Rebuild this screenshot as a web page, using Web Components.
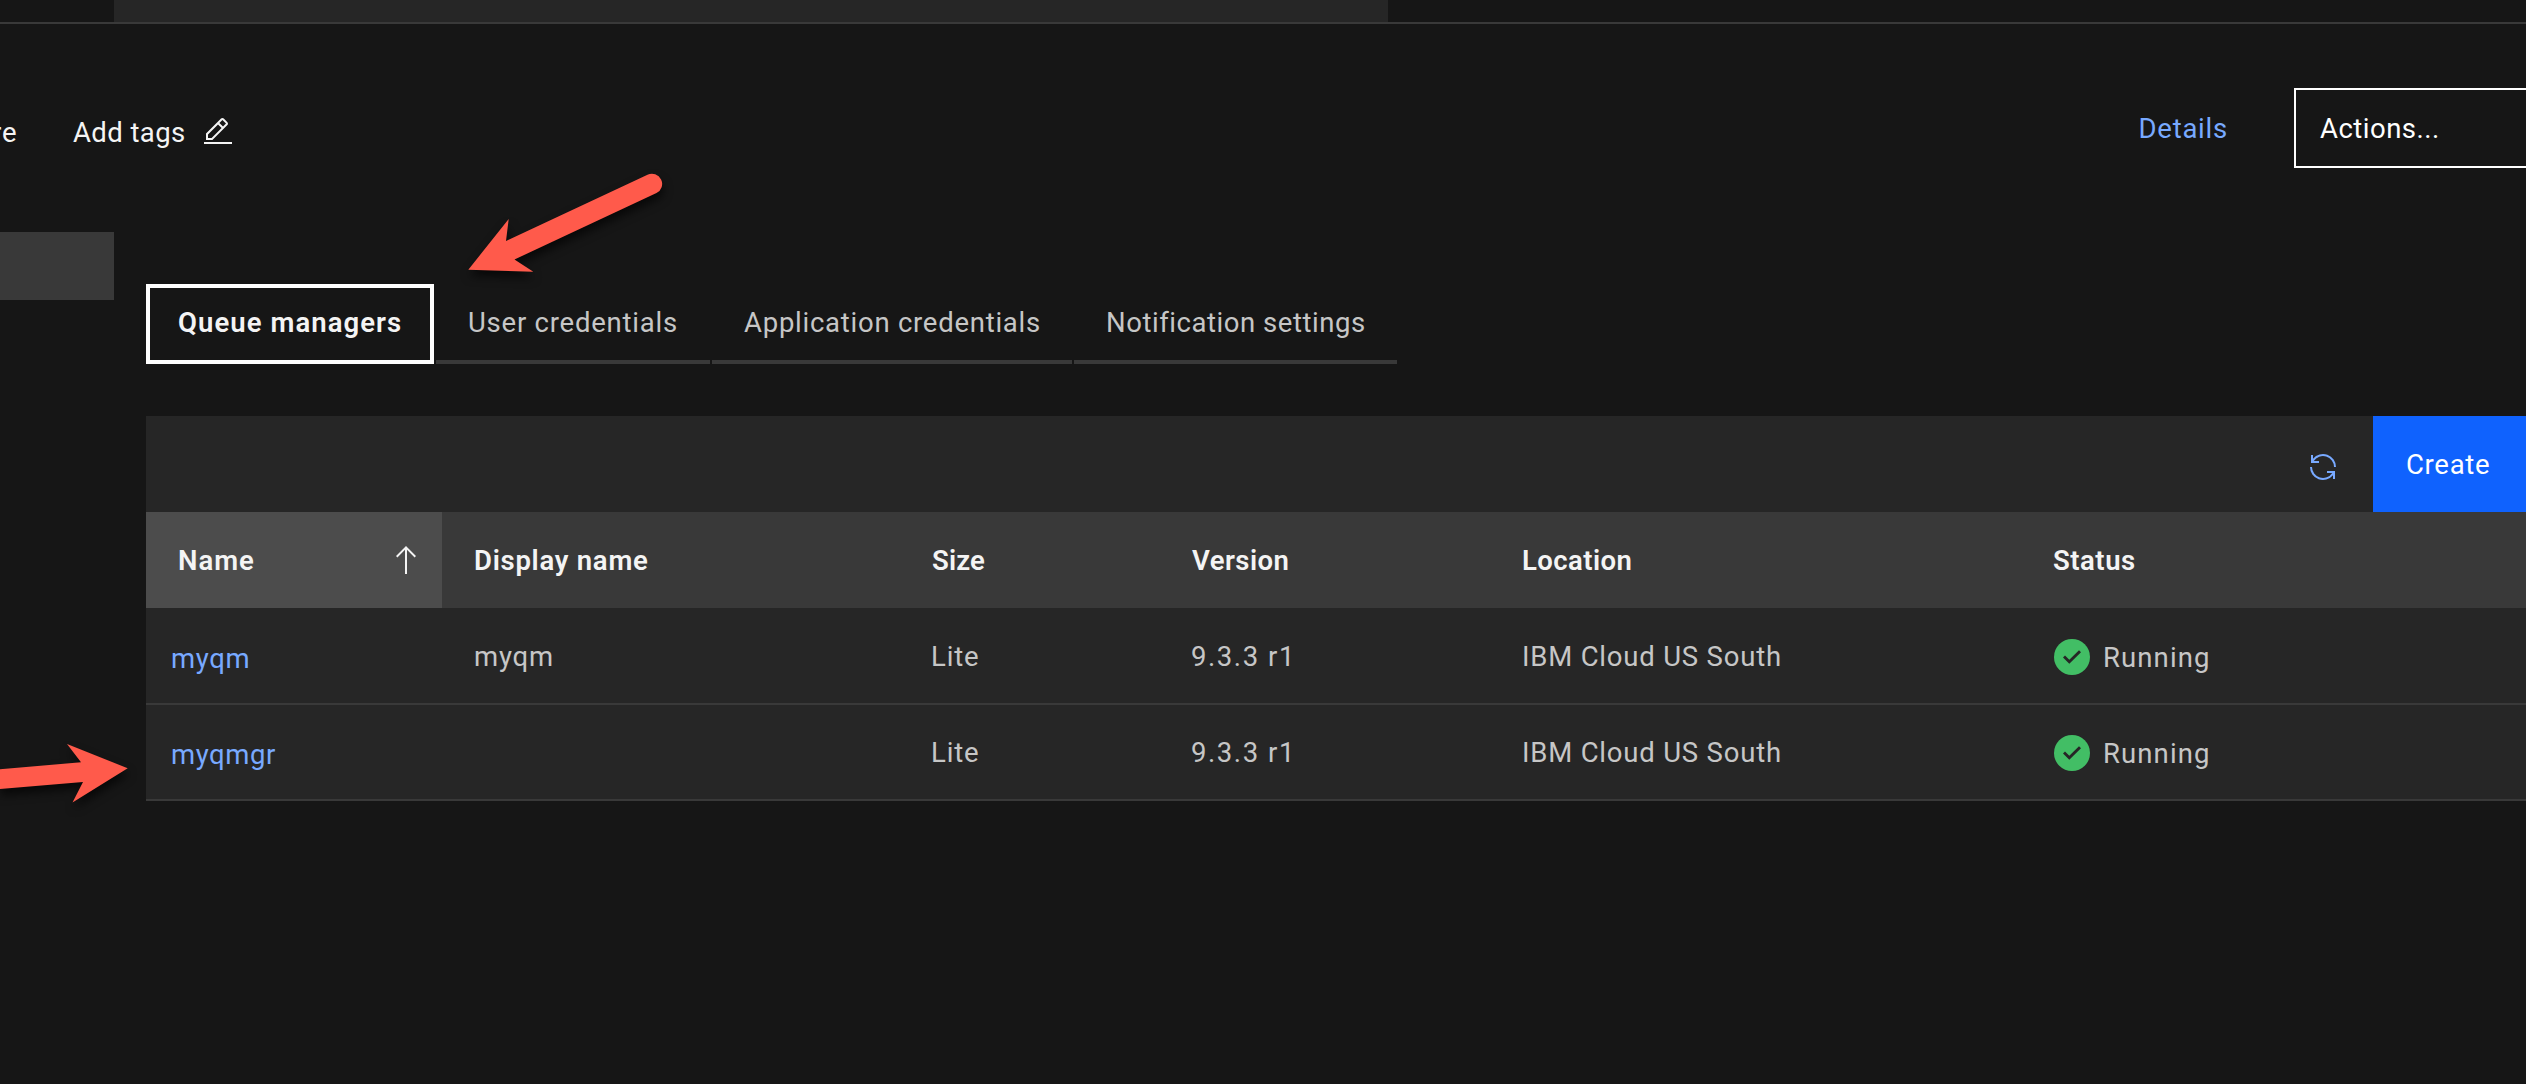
<!DOCTYPE html>
<html lang="en">
<head>
<meta charset="utf-8">
<title>Queue managers</title>
<style>
html,body{margin:0;height:100%;background:#161616;overflow:hidden}
body{font-family:Roboto,"Liberation Sans",sans-serif;font-size:27.5px;color:#f4f4f4}
</style>
</head>
<body>
<mq-page></mq-page>
<script>
const define = (name, html, setup) => {
  const tpl = document.createElement('template');
  tpl.innerHTML = html;
  customElements.define(name, class extends HTMLElement {
    connectedCallback() {
      if (this.shadowRoot) return;
      this.attachShadow({ mode: 'open' }).append(tpl.content.cloneNode(true));
      if (setup) setup(this, this.shadowRoot);
    }
  });
};

/* A label whose letters are tracked so that its ink spans the given width. */
const ctx = document.createElement('canvas').getContext('2d');
define('fit-label', `<style>
  :host{display:block;line-height:36px;white-space:nowrap;height:36px;flex:none}
  :host([strong]){font-weight:600}
</style><slot></slot>`, (el) => {
  const text = el.textContent, cs = getComputedStyle(el);
  ctx.font = `${cs.fontWeight} ${cs.fontSize} Roboto, "Liberation Sans", sans-serif`;
  ctx.letterSpacing = '1px';
  const m = ctx.measureText(text), n = text.length;
  const ink = m.actualBoundingBoxRight + m.actualBoundingBoxLeft - (n - 1);
  const gap = (parseFloat(el.getAttribute('span')) - ink) / (n - 1);
  el.style.letterSpacing = gap.toFixed(3) + 'px';
  el.style.textIndent = m.actualBoundingBoxLeft.toFixed(2) + 'px';
  el.style.width = el.getAttribute('span') + 'px';
});

define('mq-icon', `<style>
  :host{display:block;flex:none}
  svg{display:none;overflow:visible;fill:currentColor}
  :host([name=edit]) .edit,:host([name=renew]) .renew,:host([name=up]) .up,:host([name=ok]) .ok{display:block}
</style>
<svg class="edit" width="32" height="32" viewBox="0 0 32 32"><path d="M2 26h28v2H2zM25.4 9c.8-.8.8-2 0-2.8l-3.6-3.6c-.8-.8-2-.8-2.8 0l-15 15V24h6.4l15-15zm-5-5L24 7.6l-3 3L17.4 7l3-3zM6 22v-3.6l10-10 3.6 3.6-10 10H6z"/></svg>
<svg class="renew" width="32" height="32" viewBox="0 0 32 32"><path d="M12 10H6.78A11 11 0 0 1 27 16h2A13 13 0 0 0 6 7.68V4H4v8h8zM20 22h5.22A11 11 0 0 1 5 16H3a13 13 0 0 0 23 8.32V28h2v-8h-8z"/></svg>
<svg class="up" width="20" height="28" viewBox="0 0 20 28"><path d="M10 0L0 10l1.41 1.41L9 3.83V28h2V3.83l7.59 7.58L20 10z"/></svg>
<svg class="ok" width="36" height="36" viewBox="0 0 36 36"><circle cx="18" cy="18" r="18" fill="#42be65"/><path fill="#262626" d="M9 18.4l2-1.9 4.3 4.2 9.7-9.4 2 2-11.7 11.4z"/></svg>`);

define('mq-topbar', `<style>
  :host{display:flex;height:22px;border-bottom:2px solid #393939;padding-left:114px}
  div{width:1274px;background:#262626}
</style><div></div>`);

define('mq-header', `<style>
  :host{display:flex;height:208px;align-items:flex-start}
  .crumb{width:73px;overflow:hidden;padding-top:91px;display:flex}
  .crumb fit-label{margin-left:-7px}
  .tags{padding-top:91px}
  .icon{padding:92px 0 0 18px;flex:1}
  .details{padding-top:87px;color:#78a9ff;margin-right:68px}
  .actions{margin-top:64px;box-sizing:border-box;width:232px;height:80px;border:2px solid #fff;border-right:0;padding:21px 0 0 24px;color:#fff}
</style>
<div class="crumb"><fit-label span="23">re</fit-label></div>
<fit-label class="tags" span="111">Add tags</fit-label>
<mq-icon class="icon" name="edit"></mq-icon>
<fit-label class="details" span="85.5">Details</fit-label>
<div class="actions"><fit-label span="118">Actions...</fit-label></div>`);

define('mq-tab', `<style>
  :host{display:block;box-sizing:border-box;height:80px;border-bottom:4px solid #393939;color:#c6c6c6;padding:21px 0 0 33px}
  :host([selected]){border:4px solid #fff;color:#f4f4f4;padding:17px 0 0 29px}
</style><slot></slot>`);

define('mq-tabs', `<style>
  :host{display:flex;gap:2px}
</style>
<mq-tab selected style="width:288px"><fit-label strong span="222">Queue managers</fit-label></mq-tab>
<mq-tab style="width:274px"><fit-label span="207">User credentials</fit-label></mq-tab>
<mq-tab style="width:360px;padding-left:32px"><fit-label span="295">Application credentials</fit-label></mq-tab>
<mq-tab style="width:323px;padding-left:34px"><fit-label span="256">Notification settings</fit-label></mq-tab>`);

define('mq-toolbar', `<style>
  :host{display:flex;justify-content:flex-end;height:96px;background:#262626;align-items:flex-start}
  mq-icon{color:#78a9ff;margin:35px 34px 0 0}
  .create{box-sizing:border-box;width:153px;height:96px;background:#0f62fe;color:#fff;padding:31px 0 0 34px}
</style>
<mq-icon name="renew"></mq-icon>
<div class="create"><fit-label span="82">Create</fit-label></div>`);

define('mq-row', `<style>
  :host{display:grid;grid-template-columns:296px 458px 260px 330px 530px 1fr;height:95px;background:#262626;border-bottom:2px solid #393939;color:#c6c6c6}
  :host([last]){height:94px}
  :host([head]){height:96px;border:0;background:#393939;color:#f4f4f4;font-weight:600}
</style><slot></slot>`);

define('mq-cell', `<style>
  :host{display:flex;align-items:flex-start;box-sizing:border-box;padding:31px 0 0 33px}
  :host([sorted]){background:#4c4c4c;justify-content:space-between;padding-right:26px}
  :host([sorted]) ::slotted(mq-icon){margin-top:3px}
  :host([link]){color:#78a9ff;padding:33px 0 0 26px}
  :host([status]){padding:32px 0 0 33px}
  ::slotted(mq-icon[name=ok]){margin:-1px 15px 0 1px}
</style><slot></slot>`);

define('mq-table', `<style>:host{display:block}</style>
<mq-row head>
  <mq-cell sorted><fit-label span="75">Name</fit-label><mq-icon name="up"></mq-icon></mq-cell>
  <mq-cell><fit-label span="173">Display name</fit-label></mq-cell>
  <mq-cell style="padding-left:32px"><fit-label span="53">Size</fit-label></mq-cell>
  <mq-cell style="padding-left:32px"><fit-label span="95.5">Version</fit-label></mq-cell>
  <mq-cell><fit-label span="107.5">Location</fit-label></mq-cell>
  <mq-cell><fit-label span="82">Status</fit-label></mq-cell>
</mq-row>
<mq-row>
  <mq-cell link><fit-label span="76.5">myqm</fit-label></mq-cell>
  <mq-cell><fit-label span="77">myqm</fit-label></mq-cell>
  <mq-cell><fit-label span="45">Lite</fit-label></mq-cell>
  <mq-cell style="padding-left:32px"><fit-label span="97">9.3.3 r1</fit-label></mq-cell>
  <mq-cell style="padding-left:34px"><fit-label span="256">IBM Cloud US South</fit-label></mq-cell>
  <mq-cell status><mq-icon name="ok"></mq-icon><fit-label span="103">Running</fit-label></mq-cell>
</mq-row>
<mq-row last>
  <mq-cell link style="padding-top:32px"><fit-label span="103">myqmgr</fit-label></mq-cell>
  <mq-cell></mq-cell>
  <mq-cell style="padding-top:30px"><fit-label span="45">Lite</fit-label></mq-cell>
  <mq-cell style="padding:30px 0 0 32px"><fit-label span="97">9.3.3 r1</fit-label></mq-cell>
  <mq-cell style="padding:30px 0 0 34px"><fit-label span="256">IBM Cloud US South</fit-label></mq-cell>
  <mq-cell status style="padding-top:31px"><mq-icon name="ok"></mq-icon><fit-label span="103">Running</fit-label></mq-cell>
</mq-row>`);

/* Callout arrows drawn over the page. */
define('mq-arrows', `<style>
  :host{position:absolute;left:0;top:0;pointer-events:none}
  svg{display:block;filter:drop-shadow(1px 6px 5px rgba(0,0,0,.65))}
</style>
<svg width="700" height="830" viewBox="0 0 700 830" fill="#ff5a4b">
  <path d="M468.3 269.7L508.7 219 506 241 647.5 174.8A10 10 0 0 1 656.5 193L514.5 259.5 533.3 271.8z"/>
  <path d="M-30 771.7L81 762.3 67 744 127.7 768.2 72.5 802.5 83 782 -30 791.5z"/>
</svg>`);

define('mq-page', `<style>
  :host{display:block;position:relative;width:2526px;height:1084px;background:#161616;overflow:hidden}
  .body{display:flex}
  nav{width:114px;flex:none;margin-right:32px}
  nav div{height:68px;background:#393939}
  main{flex:1;padding-top:52px}
  mq-toolbar{margin-top:52px}
</style>
<mq-topbar></mq-topbar>
<mq-header></mq-header>
<div class="body">
  <nav><div></div></nav>
  <main><mq-tabs></mq-tabs><mq-toolbar></mq-toolbar><mq-table></mq-table></main>
</div>
<mq-arrows></mq-arrows>`);
</script>
</body>
</html>
